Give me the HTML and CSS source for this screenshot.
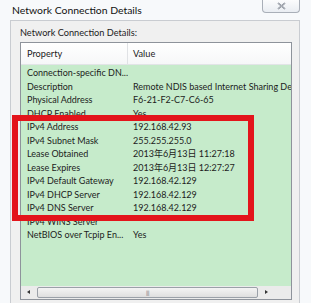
FILE: index.html
```html
<!DOCTYPE html>
<html lang="en">
<head>
    <meta charset="UTF-8">
    <title>Network Connection Details</title>
    <link rel="stylesheet" href="styles.css">
</head>
<body>
    <div class="window">
        <div class="titlebar">
            <span class="title">Network Connection Details</span>
            <div class="close-btn">
                <svg width="9" height="8" viewBox="0 0 9 8">
                    <path d="M1 1 L8 7 M8 1 L1 7" stroke="#6d7480" stroke-width="1.6" fill="none"/>
                    <path d="M1 1 L8 7 M8 1 L1 7" stroke="#f4f6f9" stroke-width="0.5" fill="none"/>
                </svg>
            </div>
        </div>

        <div class="panel">
            <div class="label">Network Connection Details:</div>
            <div class="listbox">
                <div class="list-header">
                    <div class="col col-prop">Property</div>
                    <div class="col col-value">Value</div>
                </div>
                <div class="rows">
                    <div class="row"><span>Connection-specific DN...</span><span></span></div>
                    <div class="row"><span>Description</span><span>Remote NDIS based Internet Sharing Device</span></div>
                    <div class="row"><span>Physical Address</span><span>F6-21-F2-C7-C6-65</span></div>
                    <div class="row"><span>DHCP Enabled</span><span>Yes</span></div>
                    <div class="row"><span>IPv4 Address</span><span>192.168.42.93</span></div>
                    <div class="row"><span>IPv4 Subnet Mask</span><span>255.255.255.0</span></div>
                    <div class="row"><span>Lease Obtained</span><span>2013年6月13日 11:27:18</span></div>
                    <div class="row"><span>Lease Expires</span><span>2013年6月13日 12:27:27</span></div>
                    <div class="row"><span>IPv4 Default Gateway</span><span>192.168.42.129</span></div>
                    <div class="row"><span>IPv4 DHCP Server</span><span>192.168.42.129</span></div>
                    <div class="row"><span>IPv4 DNS Server</span><span>192.168.42.129</span></div>
                    <div class="row"><span>IPv4 WINS Server</span><span></span></div>
                    <div class="row"><span>NetBIOS over Tcpip En...</span><span>Yes</span></div>
                </div>
                <div class="hscroll">
                    <div class="arrow arrow-left"></div>
                    <div class="thumb"><span class="grip">|||</span></div>
                    <div class="arrow arrow-right"></div>
                </div>
            </div>
        </div>

        <!-- annotation drawn over the list -->
        <div class="highlight"></div>
    </div>
</body>
</html>
```

FILE: styles.css
```css
body {
    margin: 0;
    font-family: Lato, "Noto Sans CJK SC", sans-serif;
    color: #1c1c1c;
}

.window {
    position: relative;
    width: 311px;
    height: 303px;
    overflow: hidden;
    background: #f7f9fb;
    display: flex;
    flex-direction: column;
}

.titlebar {
    height: 20px;
    display: flex;
    justify-content: space-between;
    align-items: flex-start;
    flex-shrink: 0;
}

.title {
    font-size: 10.4px;
    margin: 4px 0 0 12px;
    color: #111;
}

.close-btn {
    width: 36px;
    height: 12px;
    margin-right: 11px;
    border: 1px solid #a9afb8;
    border-top: none;
    border-radius: 0 0 4px 4px;
    background: linear-gradient(#fbfcfd, #e9edf2);
    display: flex;
    justify-content: center;
    align-items: center;
}

.panel {
    flex: 1;
    margin: 0 11px 0 10px;
    border: 1px solid #c9ccd1;
    border-bottom: none;
    background: #f0f0f0;
    padding: 0 7px 0 9px;
    display: flex;
    flex-direction: column;
}

.label {
    height: 21px;
    font-size: 9.2px;
    line-height: 23px;
    flex-shrink: 0;
}

.listbox {
    height: 256px;
    border: 1px solid #8e939b;
    background: #c6ebcb;
    display: flex;
    flex-direction: column;
}

.list-header {
    height: 21px;
    display: grid;
    grid-template-columns: 107px 1fr;
    background: linear-gradient(#ffffff, #f6f7f8);
    border-bottom: 1px solid #e2e4e7;
    flex-shrink: 0;
}

.col {
    font-size: 9.2px;
    line-height: 21px;
}

.col-prop {
    padding-left: 6px;
    border-right: 1px solid #e0e2e5;
}

.col-value {
    padding-left: 5px;
}

.rows {
    flex: 1;
    padding-top: 1px;
    overflow: hidden;
}

.row {
    display: grid;
    grid-template-columns: 107px 1fr;
    height: 13.5px;
    font-size: 9px;
    line-height: 13.5px;
    white-space: nowrap;
}

.row span {
    overflow: hidden;
}

.row span:first-child {
    padding-left: 6px;
}

.row span:last-child {
    padding-left: 5px;
}

.hscroll {
    height: 13px;
    background: #ebebeb;
    display: flex;
    align-items: center;
    flex-shrink: 0;
}

.arrow {
    width: 16px;
    height: 13px;
    position: relative;
    flex-shrink: 0;
}

.arrow-left::after,
.arrow-right::after {
    content: "";
    position: absolute;
    top: 4px;
    border-top: 2.5px solid transparent;
    border-bottom: 2.5px solid transparent;
}

.arrow-left::after {
    left: 6px;
    border-right: 3px solid #333;
}

.arrow-right::after {
    left: 7px;
    border-left: 3px solid #333;
}

.thumb {
    width: 221px;
    height: 11px;
    border: 1px solid #9aa0a8;
    border-radius: 2px;
    background: linear-gradient(#f4f4f4, #dedede);
    box-sizing: border-box;
    display: flex;
    justify-content: center;
    align-items: center;
}

.grip {
    font-size: 6px;
    color: #777;
    letter-spacing: -0.5px;
}

.highlight {
    position: absolute;
    left: 12px;
    top: 115px;
    width: 230px;
    height: 94px;
    border: 6px solid #e3141b;
}
```
